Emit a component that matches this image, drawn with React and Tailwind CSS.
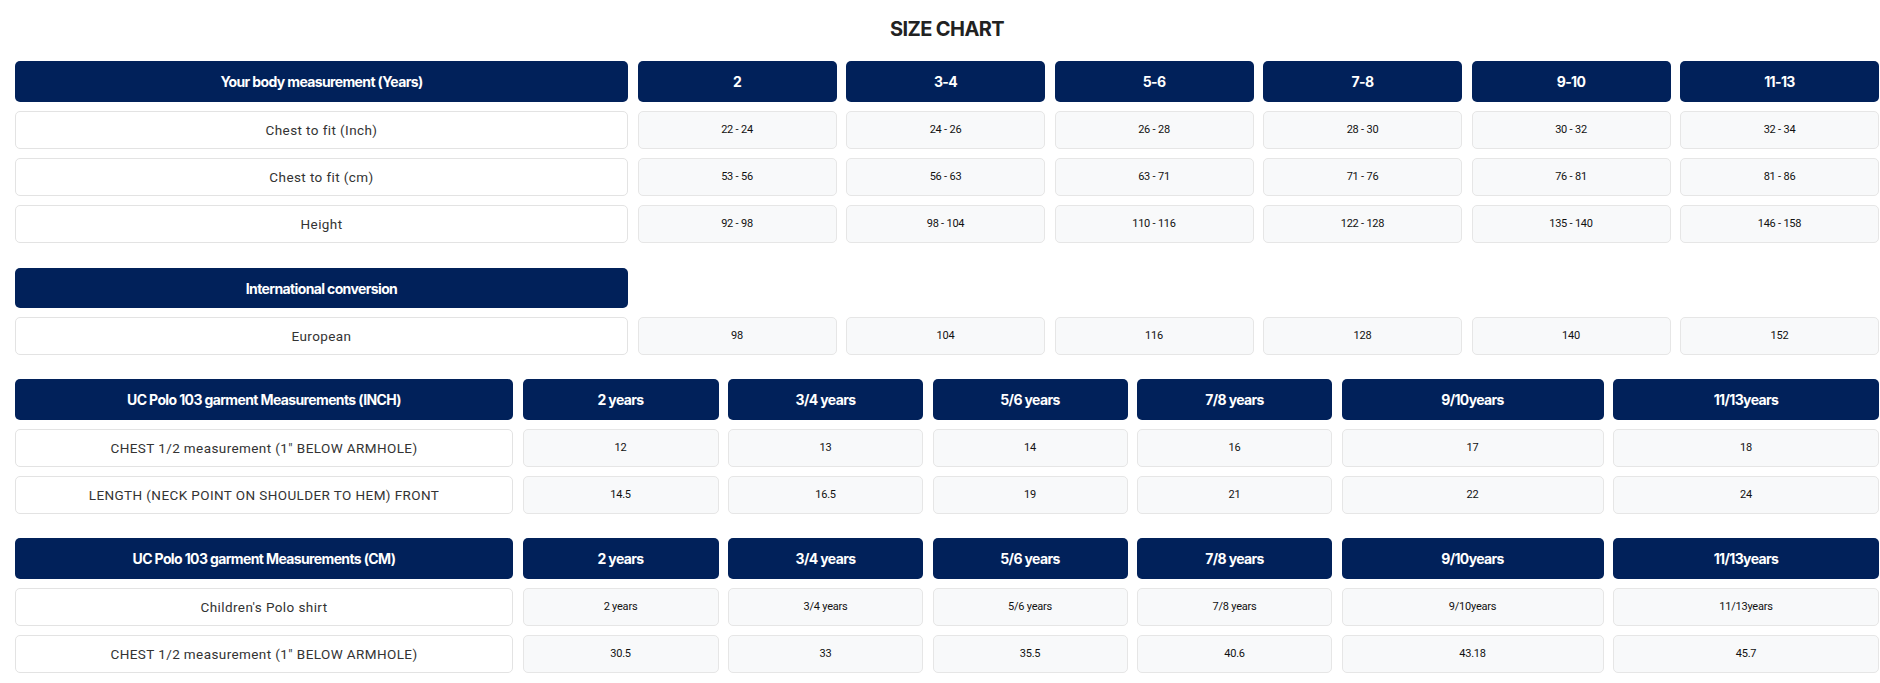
import React from "react";

const NAVY = "bg-[#01215a]";

function Head({ children, h = "h-[41px]" }) {
  return (
    <div
      className={`${NAVY} ${h} rounded-[5px] flex items-center justify-center text-white text-[14px] font-bold tracking-[-0.045em] font-['Inter',sans-serif]`}
    >
      {children}
    </div>
  );
}

function Label({ children }) {
  return (
    <div className="h-[38px] rounded-[5px] border border-[#e3e3e3] bg-white flex items-center justify-center text-[13.5px] tracking-[0.03em] text-[#333] font-['Roboto',sans-serif]">
      {children}
    </div>
  );
}

function Val({ children }) {
  return (
    <div className="h-[38px] rounded-[5px] border border-[#e6e6e6] bg-[#f8f9fa] flex items-center justify-center text-[11px] text-[#111] tracking-[-0.02em] font-['Roboto',sans-serif]">
      {children}
    </div>
  );
}

const ages1 = ["2", "3-4", "5-6", "7-8", "9-10", "11-13"];
const rows1 = [
  ["Chest to fit (Inch)", ["22 - 24", "24 - 26", "26 - 28", "28 - 30", "30 - 32", "32 - 34"]],
  ["Chest to fit (cm)", ["53 - 56", "56 - 63", "63 - 71", "71 - 76", "76 - 81", "81 - 86"]],
  ["Height", ["92 - 98", "98 - 104", "110 - 116", "122 - 128", "135 - 140", "146 - 158"]],
];
const years = ["2 years", "3/4 years", "5/6 years", "7/8 years", "9/10years", "11/13years"];
const rows3 = [
  ["CHEST 1/2 measurement (1\" BELOW ARMHOLE)", ["12", "13", "14", "16", "17", "18"]],
  ["LENGTH (NECK POINT ON SHOULDER TO HEM) FRONT", ["14.5", "16.5", "19", "21", "22", "24"]],
];
const rows4 = [
  ["Children's Polo shirt", years],
  ["CHEST 1/2 measurement (1\" BELOW ARMHOLE)", ["30.5", "33", "35.5", "40.6", "43.18", "45.7"]],
];

export default function App() {
  return (
    <div className="bg-white min-h-[683px] w-[1880px] pl-[15px] pr-[1px] pt-[15px] font-['Inter',sans-serif]">
      <h1 className="text-center text-[20px] leading-[28px] font-bold tracking-[-0.03em] text-[#222] font-['Inter',sans-serif]">
        SIZE CHART
      </h1>

      <div className="mt-[18px] grid grid-cols-[613px_repeat(6,minmax(0,1fr))] gap-x-[9.5px] gap-y-[9px]">
        <Head>Your body measurement (Years)</Head>
        {ages1.map((a) => (
          <Head key={a}>{a}</Head>
        ))}
        {rows1.map(([l, vals]) => (
          <React.Fragment key={l}>
            <Label>{l}</Label>
            {vals.map((v, i) => (
              <Val key={i}>{v}</Val>
            ))}
          </React.Fragment>
        ))}
      </div>

      <div className="mt-[25px] grid grid-cols-[613px_repeat(6,minmax(0,1fr))] gap-x-[9.5px] gap-y-[9px]">
        <Head h="h-[40px]">International conversion</Head>
        <div />
        <div />
        <div />
        <div />
        <div />
        <div />
        <Label>European</Label>
        {["98", "104", "116", "128", "140", "152"].map((v) => (
          <Val key={v}>{v}</Val>
        ))}
      </div>

      <div className="mt-[24px] grid grid-cols-[498px_196px_195px_195px_195px_262px_minmax(0,1fr)] gap-x-[9.5px] gap-y-[9px]">
        <Head>UC Polo 103 garment Measurements (INCH)</Head>
        {years.map((y) => (
          <Head key={y}>{y}</Head>
        ))}
        {rows3.map(([l, vals]) => (
          <React.Fragment key={l}>
            <Label>{l}</Label>
            {vals.map((v, i) => (
              <Val key={i}>{v}</Val>
            ))}
          </React.Fragment>
        ))}
      </div>

      <div className="mt-[24px] grid grid-cols-[498px_196px_195px_195px_195px_262px_minmax(0,1fr)] gap-x-[9.5px] gap-y-[9px]">
        <Head>UC Polo 103 garment Measurements (CM)</Head>
        {years.map((y) => (
          <Head key={y}>{y}</Head>
        ))}
        {rows4.map(([l, vals]) => (
          <React.Fragment key={l}>
            <Label>{l}</Label>
            {vals.map((v, i) => (
              <Val key={i}>{v}</Val>
            ))}
          </React.Fragment>
        ))}
      </div>
    </div>
  );
}
